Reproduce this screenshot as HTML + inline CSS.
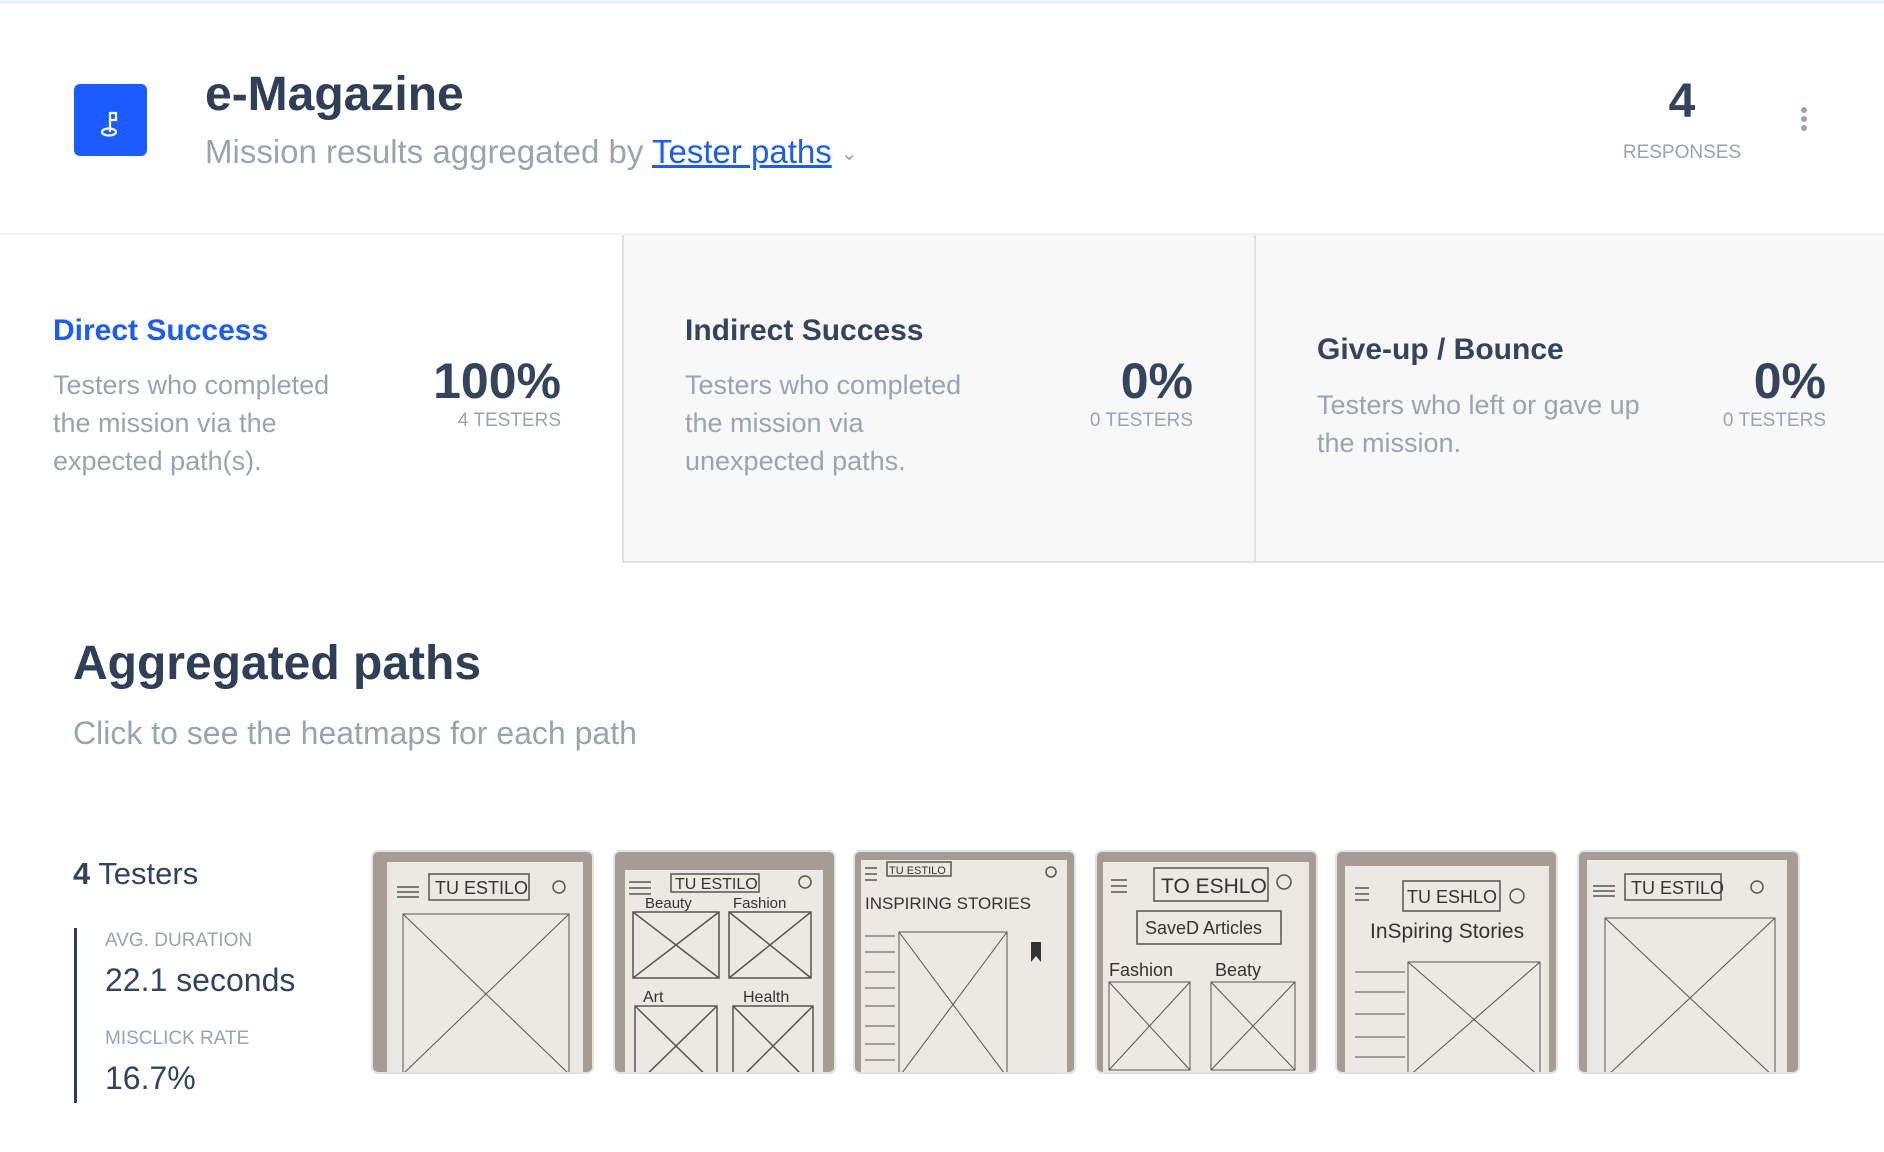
<!DOCTYPE html>
<html><head><meta charset="utf-8"><style>
*{margin:0;padding:0;box-sizing:border-box}
body{width:1884px;height:1152px;background:#fff;font-family:"Liberation Sans",sans-serif;position:relative;overflow:hidden;color:#33445c}
.a{position:absolute;white-space:nowrap}
.g{color:#9ba3ae}
.thumb{position:absolute;top:852px;width:219px;height:220px;border-radius:5px;overflow:hidden;background:#a59c93;box-shadow:0 0 0 2px #dfe4ea}
.thumb svg{display:block}
.thumb text{font-family:"Liberation Sans",sans-serif;fill:#333}
</style></head><body>
<div class="a" style="left:0;top:0;width:1884px;height:4px;background:#eef2f9"></div>
<div class="a" style="left:74px;top:84px;width:73px;height:72px;background:#1a5cff;border-radius:6px">
<svg width="73" height="72" viewBox="0 0 73 72"><g fill="none" stroke="#fff" stroke-width="2.2"><path d="M36 28v20M36 29h6v7h-6"/><ellipse cx="35" cy="48" rx="7" ry="3.5"/></g></svg></div>
<div class="a" style="left:205px;top:67px;font-size:48px;font-weight:bold;color:#2f3f57">e-Magazine</div>
<div class="a g" style="left:205px;top:133px;font-size:33px">Mission results aggregated by <span style="color:#1a5cff;text-decoration:underline">Tester paths</span> <span style="font-size:20px;position:relative;top:-3px">&#8964;</span></div>
<div class="a" style="left:1632px;top:74px;width:100px;text-align:center;font-size:48px;font-weight:bold;color:#33445c">4</div>
<div class="a g" style="left:1612px;top:142px;width:140px;text-align:center;font-size:19px">RESPONSES</div>
<div class="a" style="left:1801px;top:107px;width:6px"><div style="width:6px;height:6px;border-radius:3px;background:#9ba3ae;margin-bottom:3px"></div><div style="width:6px;height:6px;border-radius:3px;background:#9ba3ae;margin-bottom:3px"></div><div style="width:6px;height:6px;border-radius:3px;background:#9ba3ae"></div></div>
<div class="a" style="left:0;top:233px;width:1884px;height:2px;background:#f1f3f7"></div>
<div class="a" style="left:622px;top:235px;width:1262px;height:328px;background:#f8f8f9;border-left:2px solid #dfe1e4;border-bottom:2px solid #dfe1e4"></div>
<div class="a" style="left:1254px;top:235px;width:2px;height:328px;background:#dfe1e4"></div>

<div class="a" style="left:53px;top:314px;font-size:30px;font-weight:bold;color:#1a5cff">Direct Success</div>
<div class="a g" style="left:53px;top:366px;font-size:27px;line-height:38px">Testers who completed<br>the mission via the<br>expected path(s).</div>
<div class="a" style="left:361px;top:352px;width:200px;text-align:right;font-size:50px;font-weight:bold">100%</div>
<div class="a g" style="left:361px;top:410px;width:200px;text-align:right;font-size:19px">4 TESTERS</div>

<div class="a" style="left:685px;top:314px;font-size:30px;font-weight:bold">Indirect Success</div>
<div class="a g" style="left:685px;top:366px;font-size:27px;line-height:38px">Testers who completed<br>the mission via<br>unexpected paths.</div>
<div class="a" style="left:993px;top:352px;width:200px;text-align:right;font-size:50px;font-weight:bold">0%</div>
<div class="a g" style="left:993px;top:410px;width:200px;text-align:right;font-size:19px">0 TESTERS</div>

<div class="a" style="left:1317px;top:333px;font-size:30px;font-weight:bold">Give-up / Bounce</div>
<div class="a g" style="left:1317px;top:386px;font-size:27px;line-height:38px">Testers who left or gave up<br>the mission.</div>
<div class="a" style="left:1626px;top:352px;width:200px;text-align:right;font-size:50px;font-weight:bold">0%</div>
<div class="a g" style="left:1626px;top:410px;width:200px;text-align:right;font-size:19px">0 TESTERS</div>

<div class="a" style="left:73px;top:636px;font-size:48px;font-weight:bold;color:#2f3f57">Aggregated paths</div>
<div class="a g" style="left:73px;top:715px;font-size:32px">Click to see the heatmaps for each path</div>

<div class="a" style="left:73px;top:856px;font-size:31px"><b>4</b> Testers</div>
<div class="a" style="left:74px;top:928px;width:3px;height:175px;background:#2f3f57"></div>
<div class="a g" style="left:105px;top:930px;font-size:19px">AVG. DURATION</div>
<div class="a" style="left:105px;top:962px;font-size:32px">22.1 seconds</div>
<div class="a g" style="left:105px;top:1028px;font-size:19px">MISCLICK RATE</div>
<div class="a" style="left:105px;top:1060px;font-size:32px">16.7%</div>

<div class="thumb" style="left:373px"><svg width="219" height="220"><rect x="14" y="10" width="196" height="215" fill="#ece9e4"/><g stroke="#555" fill="none" stroke-width="1.5"><path d="M24 35h22M24 40h22M24 45h22"/><rect x="56" y="22" width="100" height="26"/><circle cx="186" cy="35" r="6"/><path d="M30 62h166v160H30zM30 62l166 160M196 62L30 222" stroke-width="1"/></g><text x="62" y="42" font-size="18">TU ESTILO</text></svg></div>
<div class="thumb" style="left:615px"><svg width="219" height="220"><rect x="10" y="18" width="198" height="210" fill="#ece9e4"/><g stroke="#555" fill="none" stroke-width="1.5"><path d="M14 30h22M14 36h22M14 42h22"/><rect x="56" y="22" width="88" height="18"/><circle cx="190" cy="30" r="6"/><path d="M18 60h86v66H18zM18 60l86 66M104 60L18 126M114 60h82v66h-82zM114 60l82 66M196 60l-82 66M20 154h82v80H20zM20 154l82 80M102 154l-82 80M118 154h80v80h-80zM118 154l80 80M198 154l-80 80"/></g><text x="60" y="37" font-size="16">TU ESTILO</text><text x="30" y="56" font-size="15">Beauty</text><text x="118" y="56" font-size="15">Fashion</text><text x="28" y="150" font-size="16">Art</text><text x="128" y="150" font-size="16">Health</text></svg></div>
<div class="thumb" style="left:855px"><svg width="219" height="220"><rect x="6" y="8" width="206" height="215" fill="#ece9e4"/><g stroke="#555" fill="none" stroke-width="1.5"><path d="M10 16h12M10 22h12M10 28h12"/><rect x="32" y="10" width="64" height="14"/><circle cx="196" cy="20" r="5"/><path d="M10 84h30M10 100h30M10 120h30M10 136h30M10 154h30M10 174h30M10 192h30M10 208h30M44 80h108v145H44zM44 80l108 145M152 80L44 225" stroke-width="1"/></g><path d="M176 90h10v20l-5-6-5 6z" fill="#333"/><text x="10" y="57" font-size="17">INSPIRING STORIES</text><text x="34" y="22" font-size="11">TU ESTILO</text></svg></div>
<div class="thumb" style="left:1097px"><svg width="219" height="220"><rect x="6" y="10" width="206" height="215" fill="#ece9e4"/><g stroke="#555" fill="none" stroke-width="1.5"><path d="M14 28h16M14 34h16M14 40h16"/><rect x="57" y="16" width="114" height="33"/><circle cx="187" cy="30" r="7"/><rect x="40" y="59" width="144" height="33"/><path d="M12 130h81v88H12zM12 130l81 88M93 130l-81 88M114 130h84v88h-84zM114 130l84 88M198 130l-84 88" stroke-width="1"/></g><text x="64" y="41" font-size="21">TO ESHLO</text><text x="48" y="82" font-size="18">SaveD Articles</text><text x="12" y="124" font-size="18">Fashion</text><text x="118" y="124" font-size="18">Beaty</text></svg></div>
<div class="thumb" style="left:1337px"><svg width="219" height="220"><rect x="8" y="14" width="204" height="210" fill="#ece9e4"/><g stroke="#555" fill="none" stroke-width="1.5"><path d="M18 36h14M18 42h14M18 48h14"/><rect x="66" y="29" width="97" height="30"/><circle cx="180" cy="44" r="7"/><path d="M18 120h50M18 140h50M18 162h50M18 185h50M18 205h50M71 110h132v115H71zM71 110l132 115M203 110L71 225" stroke-width="1"/></g><text x="70" y="51" font-size="18">TU ESHLO</text><text x="33" y="86" font-size="21">InSpiring Stories</text></svg></div>
<div class="thumb" style="left:1579px"><svg width="219" height="220"><rect x="8" y="8" width="200" height="215" fill="#ece9e4"/><g stroke="#555" fill="none" stroke-width="1.5"><path d="M14 34h22M14 39h22M14 44h22"/><rect x="46" y="22" width="96" height="26"/><circle cx="178" cy="35" r="6"/><path d="M26 66h170v160H26zM26 66l170 160M196 66L26 226" stroke-width="1"/></g><text x="52" y="42" font-size="18">TU ESTILO</text></svg></div>
</body></html>
